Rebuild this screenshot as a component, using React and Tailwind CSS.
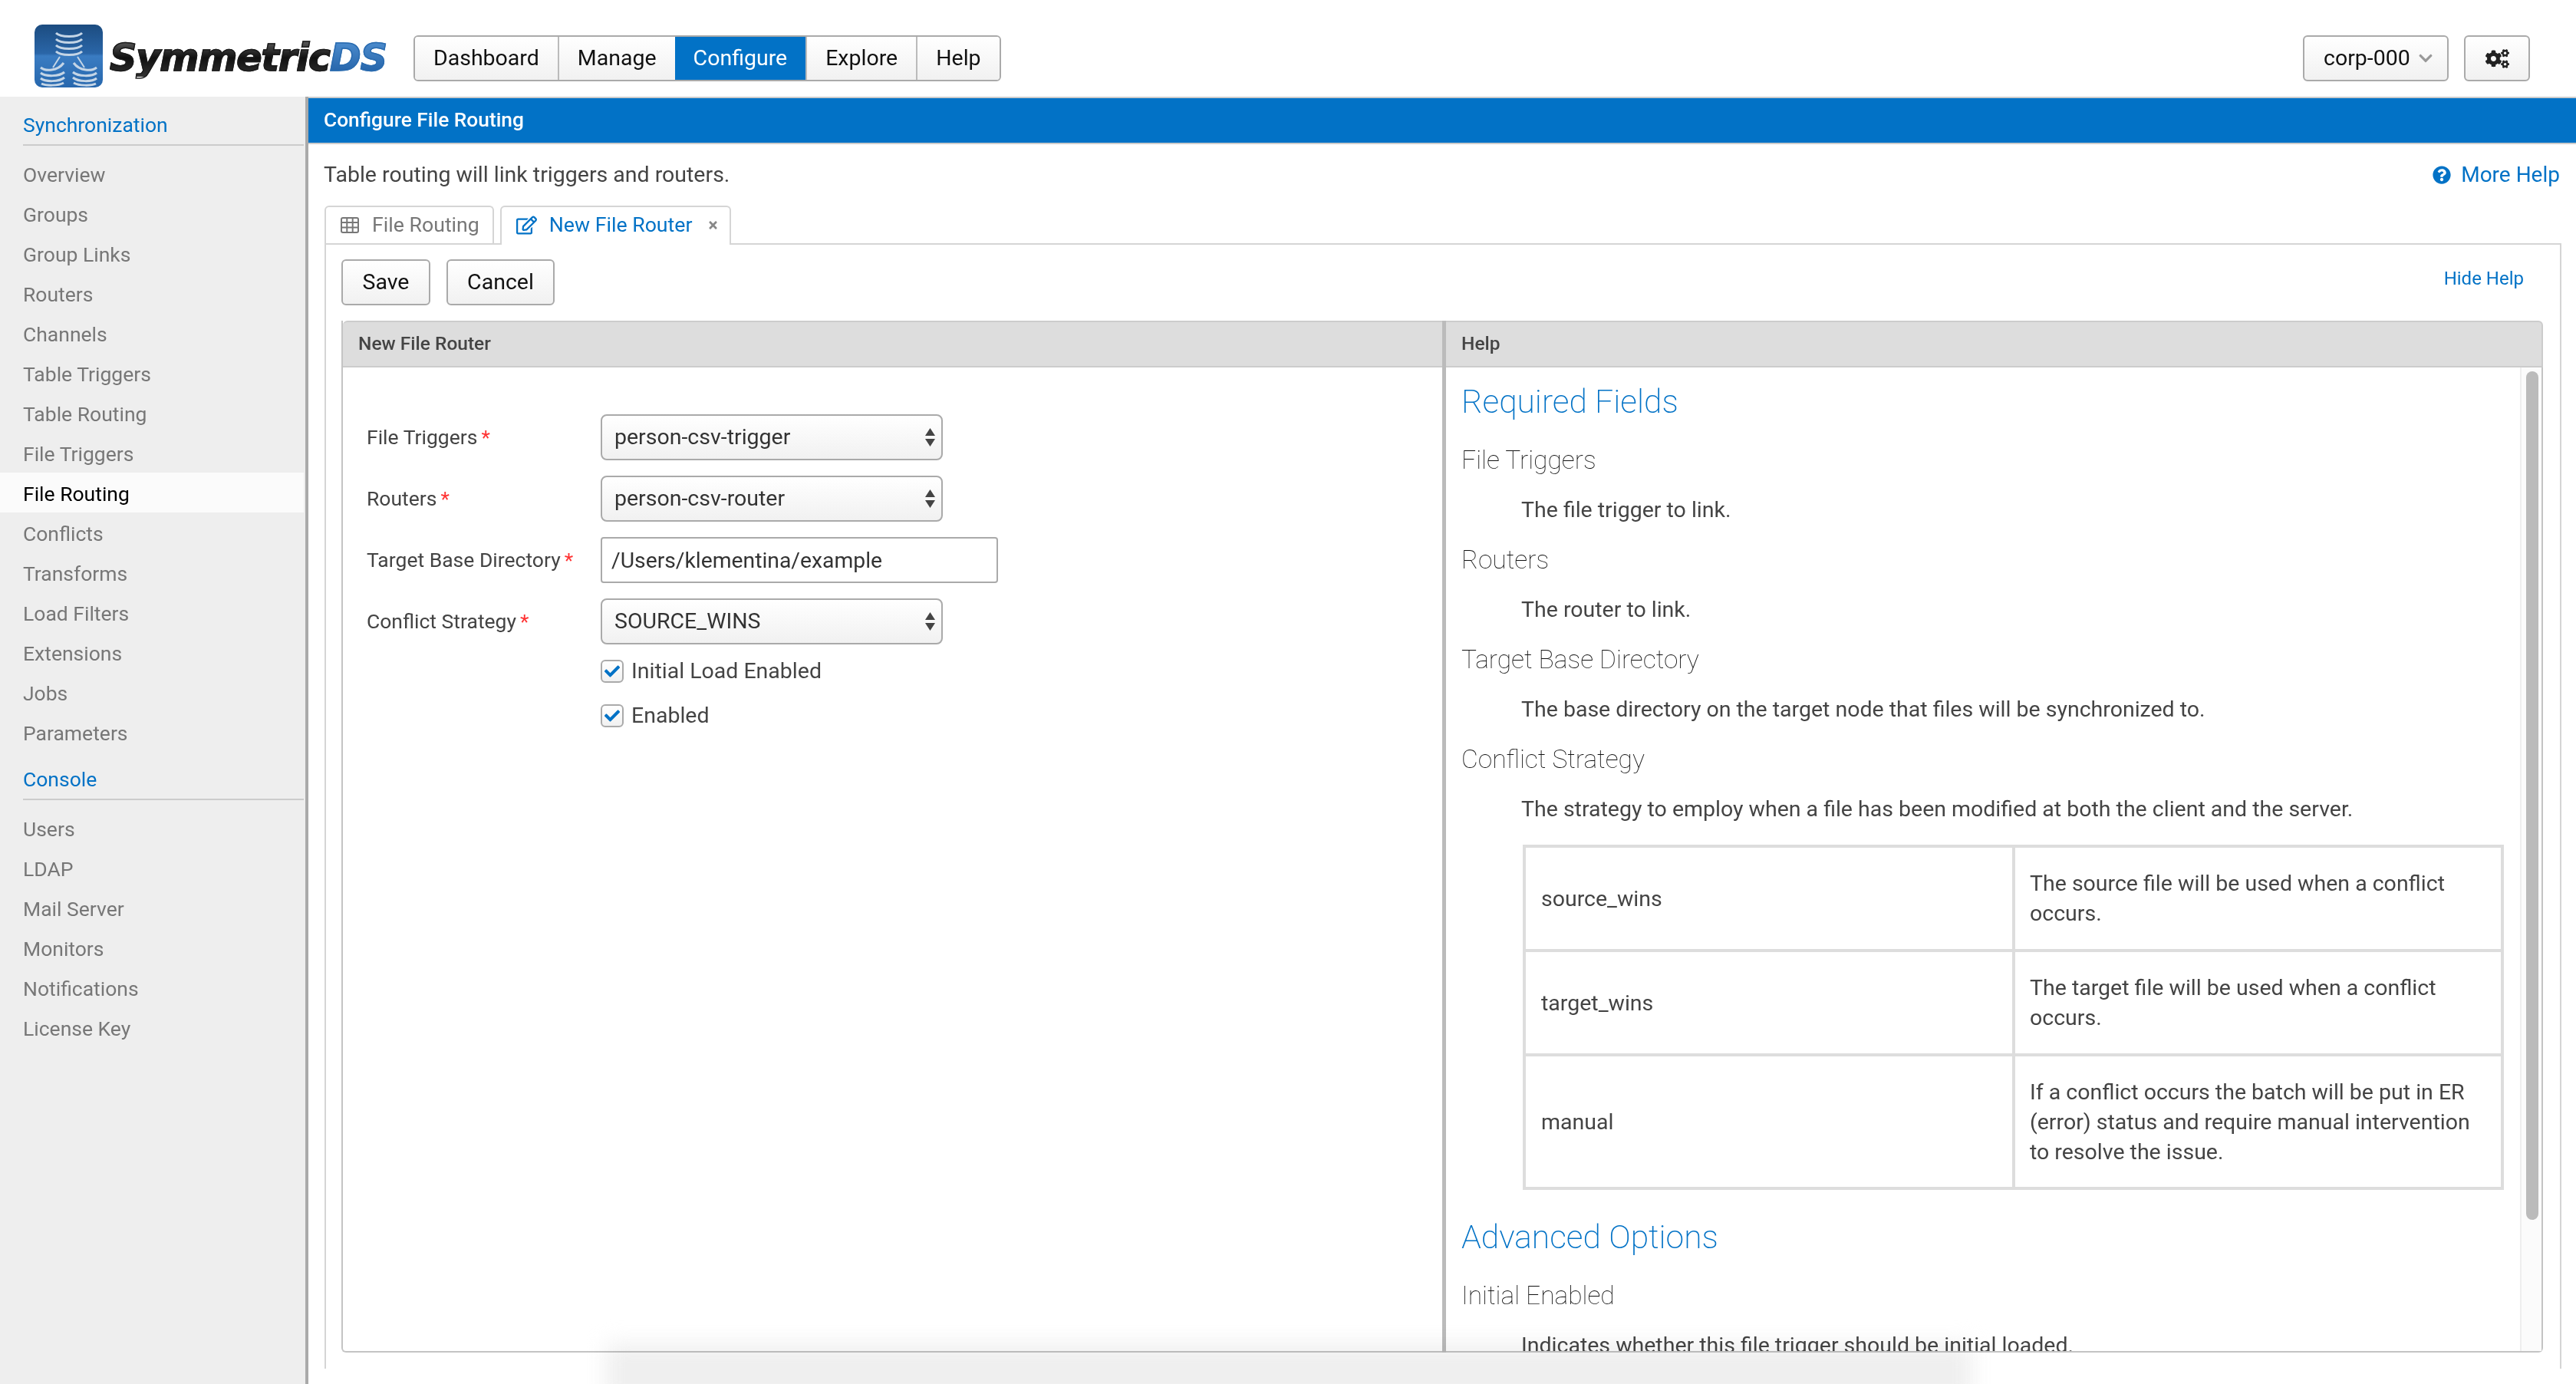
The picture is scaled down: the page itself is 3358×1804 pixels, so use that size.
import { FaCheck, FaChevronDown, FaCogs, FaQuestionCircle, FaRegEdit, FaTimes } from "react-icons/fa";

const syncItems = ["Overview", "Groups", "Group Links", "Routers", "Channels", "Table Triggers", "Table Routing", "File Triggers", "File Routing", "Conflicts", "Transforms", "Load Filters", "Extensions", "Jobs", "Parameters"];
const consoleItems = ["Users", "LDAP", "Mail Server", "Monitors", "Notifications", "License Key"];
const navItems = ["Dashboard", "Manage", "Configure", "Explore", "Help"];

function Logo() {
  return (
    <div className="flex items-center w-[494px] -mt-[7px] blur-[0.6px]">
      <svg width="89" height="82" viewBox="0 0 89 82">
        <defs>
          <linearGradient id="logoBg" x1="0" y1="0" x2="0" y2="1">
            <stop offset="0" stopColor="#1c4c80" />
            <stop offset="0.46" stopColor="#2a66a8" />
            <stop offset="0.5" stopColor="#3a7cc2" />
            <stop offset="1" stopColor="#2767ad" />
          </linearGradient>
        </defs>
        <rect width="89" height="82" rx="10" fill="url(#logoBg)" />
        <g fill="none" stroke="#c4d5e6" strokeWidth="3">
          <path d="M28 11c6 6 28 6 34 0M28 19c6 6 28 6 34 0M28 27c6 6 28 6 34 0M28 35c6 6 28 6 34 0" />
          <path d="M8 56c6 5 22 5 30-6M8 63c6 5 24 5 31-1M8 70c6 5 24 5 31-1M9 77c6 3 22 3 29-1" />
          <path d="M81 56c-6 5-22 5-30-6M81 63c-6 5-24 5-31-1M81 70c-6 5-24 5-31-1M80 77c-6 3-22 3-29-1" />
          <path d="M33 42l-9 14M56 42l9 14" strokeWidth="2" />
        </g>
      </svg>
      <span className="ml-[9px] mt-[6px] font-['DejaVu_Sans',sans-serif] font-bold italic text-[49px] leading-none tracking-[-1px] flex">
        <span className="bg-linear-to-b from-[#666] via-[#111] to-[#333] bg-clip-text text-transparent [-webkit-text-stroke:1.5px_#1c1c1c]">Symmetric</span>
        <span className="bg-linear-to-b from-[#4f8fd0] to-[#1f5fa5] bg-clip-text text-transparent [-webkit-text-stroke:1.5px_#2b6cb0]">DS</span>
      </span>
    </div>
  );
}

function Header() {
  return (
    <header className="h-[126px] shrink-0 flex items-center pt-[26px] pl-[45px] pr-[60px] bg-white">
      <Logo />
      <nav className="flex h-[60px] border-2 border-[#aaa] rounded-[6px] overflow-hidden">
        {navItems.map((item, i) => (
          <div
            key={item}
            className={
              item === "Configure"
                ? "flex items-center px-[24px] bg-[#0272c6] text-white text-[28.5px] font-normal"
                : `flex items-center px-[24px] bg-linear-to-b from-white to-[#f1f1f1] text-[#111] text-[28.5px] ${i > 0 ? "border-l-2 border-[#bbb]" : ""}`
            }
          >
            {item}
          </div>
        ))}
      </nav>
      <div className="ml-auto flex gap-[20px]">
        <div className="flex items-center h-[60px] w-[190px] pl-[25px] border-2 border-[#aaa] rounded-[6px] bg-linear-to-b from-white to-[#f1f1f1] text-[#111] text-[28.5px]">
          corp-000
          <FaChevronDown className="ml-[10px] text-[#999] text-[20px]" />
        </div>
        <div className="flex items-center justify-center h-[60px] w-[86px] border-2 border-[#aaa] rounded-[6px] bg-linear-to-b from-white to-[#f1f1f1] text-[#222]">
          <FaCogs className="text-[31px]" />
        </div>
      </div>
    </header>
  );
}

function SideSection({ title, items }) {
  return (
    <div>
      <div className="h-[53px] ml-[30px] flex items-center text-[#0272c6] text-[26.5px] border-b-2 border-[#ccc] mb-[10px]">{title}</div>
      {items.map((item) => (
        <div
          key={item}
          className={
            item === "File Routing"
              ? "h-[52px] pl-[30px] pt-[4px] flex items-center bg-[#fbfbfb] text-black text-[26.5px]"
              : "h-[52px] pl-[30px] pt-[4px] flex items-center text-[#777] text-[26.5px]"
          }
        >
          {item}
        </div>
      ))}
    </div>
  );
}

function Sidebar() {
  return (
    <aside className="w-[402px] shrink-0 bg-[#eee] border-r-4 border-[#aaa] pr-[2px] pt-[11px] flex flex-col gap-[10px]">
      <SideSection title="Synchronization" items={syncItems} />
      <SideSection title="Console" items={consoleItems} />
    </aside>
  );
}

function TableIcon() {
  return (
    <svg width="24" height="21" viewBox="0 0 24 21" fill="none" stroke="#777" strokeWidth="2">
      <rect x="1" y="1" width="22" height="19" rx="2" />
      <path d="M1 7h22M1 13.5h22M8.3 1v19M15.7 1v19" />
    </svg>
  );
}

function Arrows() {
  return (
    <svg width="13" height="24" viewBox="0 0 13 24" fill="#444">
      <path d="M6.5 0L13 10H0zM0 14h13L6.5 24z" />
    </svg>
  );
}

function Field({ label, children }) {
  return (
    <div className="flex items-center h-[60px]">
      <div className="w-[305px] text-[#444] text-[26.5px]">
        {label}
        <span className="ml-[5px] text-[#f33]">*</span>
      </div>
      {children}
    </div>
  );
}

function SelectBox({ value }) {
  return (
    <div className="w-[446px] h-[60px] flex items-center justify-between pl-[16px] pr-[8px] border-2 border-[#aaa] rounded-[8px] bg-linear-to-b from-white to-[#f1f1f1] text-[#333] text-[28.5px]">
      {value}
      <Arrows />
    </div>
  );
}

function CheckRow({ label }) {
  return (
    <div className="flex items-center h-[30px] ml-[305px]">
      <div className="w-[30px] h-[30px] flex items-center justify-center border-2 border-[#aaa] rounded-[6px] bg-linear-to-b from-white to-[#f1f1f1]">
        <FaCheck className="text-[#0272c6] text-[20px]" />
      </div>
      <span className="ml-[10px] text-[#444] text-[28.5px]">{label}</span>
    </div>
  );
}

function FormPanel() {
  return (
    <section className="w-[1435px] shrink-0 flex flex-col border-l-2 border-b-2 border-[#c4c4c4] rounded-bl-[6px]">
      <div className="h-[61px] shrink-0 flex items-center pl-[20px] bg-[#ddd] border-y-2 border-[#ccc] rounded-tl-[6px] text-[#444] text-[24.5px] font-medium">New File Router</div>
      <div className="pt-[61px] pl-[31px] flex flex-col gap-[20px]">
        <Field label="File Triggers"><SelectBox value="person-csv-trigger" /></Field>
        <Field label="Routers"><SelectBox value="person-csv-router" /></Field>
        <Field label="Target Base Directory">
          <input readOnly defaultValue="/Users/klementina/example" className="w-[518px] h-[60px] pl-[12px] border-2 border-[#aaa] rounded-[4px] bg-white text-[#333] text-[28.3px]" />
        </Field>
        <Field label="Conflict Strategy"><SelectBox value="SOURCE_WINS" /></Field>
        <div className="flex flex-col gap-[28px]">
          <CheckRow label="Initial Load Enabled" />
          <CheckRow label="Enabled" />
        </div>
      </div>
    </section>
  );
}

function H3({ children }) {
  return <h3 className="h-[65px] flex items-center text-[#111] text-[33.5px] font-thin">{children}</h3>;
}

function P({ children }) {
  return <p className="h-[65px] flex items-center pl-[78px] text-[#444] text-[28.5px]">{children}</p>;
}

function H2({ children }) {
  return <h2 className="h-[89px] flex items-center text-[#0272c6] text-[42.5px] font-extralight">{children}</h2>;
}

function HelpTable() {
  const rows = [
    ["source_wins", "The source file will be used when a conflict occurs.", "h-[136px]"],
    ["target_wins", "The target file will be used when a conflict occurs.", "h-[136px]"],
    ["manual", "If a conflict occurs the batch will be put in ER (error) status and require manual intervention to resolve the issue.", "h-[174px]"],
  ];
  return (
    <table className="ml-[80px] mt-[13px] mb-[17px] w-[1279px] border-collapse table-fixed text-[#444] text-[28.5px] leading-[39px]">
      <tbody>
        {rows.map(([name, text, h]) => (
          <tr key={name} className={h}>
            <td className="w-[638px] border-4 border-[#ddd] pl-[20px]">{name}</td>
            <td className="border-4 border-[#ddd] pl-[19px] pr-[30px]">{text}</td>
          </tr>
        ))}
      </tbody>
    </table>
  );
}

function HelpPanel() {
  return (
    <section className="flex-1 min-w-0 flex flex-col border-l-[5px] border-[#bbb]">
      <div className="h-[61px] shrink-0 flex items-center pl-[20px] bg-[#ddd] border-y-2 border-r-2 border-[#ccc] rounded-tr-[6px] text-[#444] text-[24.5px] font-medium">Help</div>
      <div className="flex-1 min-h-0 flex border-b-2 border-r-2 border-[#c4c4c4] rounded-br-[6px]">
        <div className="flex-1 min-w-0 overflow-hidden pl-[20px]">
          <H2>Required Fields</H2>
          <H3>File Triggers</H3>
          <P>The file trigger to link.</P>
          <H3>Routers</H3>
          <P>The router to link.</P>
          <H3>Target Base Directory</H3>
          <P>The base directory on the target node that files will be synchronized to.</P>
          <H3>Conflict Strategy</H3>
          <P>The strategy to employ when a file has been modified at both the client and the server.</P>
          <HelpTable />
          <H2>Advanced Options</H2>
          <H3>Initial Enabled</H3>
          <P>Indicates whether this file trigger should be initial loaded.</P>
        </div>
        <div className="w-[28px] shrink-0 border-l-2 border-[#eee] bg-[#fbfbfb] pl-[6px] pt-[5px]">
          <div className="w-[16px] h-[1106px] rounded-full bg-[#bbb]" />
        </div>
      </div>
    </section>
  );
}

function Content() {
  return (
    <main className="flex-1 min-w-0 flex flex-col">
      <div className="h-[62px] shrink-0 flex items-center pl-[20px] bg-[#0272c6] border-y-2 border-[#ccc] text-white text-[26.3px] font-medium">Configure File Routing</div>
      <div className="h-[80px] shrink-0 flex items-center justify-between pl-[20px] pr-[21px] text-[#444] text-[28.5px]">
        <span>Table routing will link triggers and routers.</span>
        <span className="flex items-center text-[#0272c6] text-[28px]">
          <FaQuestionCircle className="mr-[13px] text-[24px]" />
          More Help
        </span>
      </div>
      <div className="flex ml-[21px] gap-[8px] h-[49px] shrink-0">
        <div className="flex items-center pl-[19px] pr-[17px] border-x-2 border-t-2 border-[#d5d5d5] rounded-t-[6px] text-[#777] text-[26.7px]">
          <TableIcon />
          <span className="ml-[17px]">File Routing</span>
        </div>
        <div className="relative z-10 h-[51px] flex items-center pl-[19px] pr-[14px] pb-[2px] bg-white border-x-2 border-t-2 border-[#d5d5d5] rounded-t-[6px] text-[#0272c6] text-[26.7px]">
          <FaRegEdit className="text-[27px]" />
          <span className="ml-[16px]">New File Router</span>
          <FaTimes className="ml-[19px] text-[#888] text-[15px]" />
        </div>
      </div>
      <div className="ml-[21px] mr-[19px] flex-1 min-h-0 flex flex-col border-x-2 border-t-2 border-[#d5d5d5] mb-[20px]">
        <div className="h-[99px] shrink-0 flex items-start justify-between pt-[19px] pl-[20px] pr-[47px]">
          <div className="flex gap-[21px]">
            <button className="w-[116px] h-[60px] border-2 border-[#aaa] rounded-[6px] bg-linear-to-b from-white to-[#f1f1f1] text-[#111] text-[28.5px]">Save</button>
            <button className="w-[141px] h-[60px] border-2 border-[#aaa] rounded-[6px] bg-linear-to-b from-white to-[#f1f1f1] text-[#111] text-[28.5px]">Cancel</button>
          </div>
          <span className="mt-[7px] text-[#0272c6] text-[24px]">Hide Help</span>
        </div>
        <div className="flex-1 min-h-0 flex ml-[20px] mr-[22px] mb-[21px]">
          <FormPanel />
          <HelpPanel />
        </div>
      </div>
    </main>
  );
}

export default function App() {
  return (
    <div className="relative w-full h-[1804px] overflow-hidden flex flex-col bg-white font-['Roboto',sans-serif]">
      <Header />
      <div className="flex-1 min-h-0 flex">
        <Sidebar />
        <Content />
      </div>
      {/* faint shadow along the bottom edge */}
      <div className="absolute bottom-[-24px] left-[790px] w-[1780px] h-[76px] bg-[#efefef] blur-[14px] mix-blend-multiply pointer-events-none" />
    </div>
  );
}
